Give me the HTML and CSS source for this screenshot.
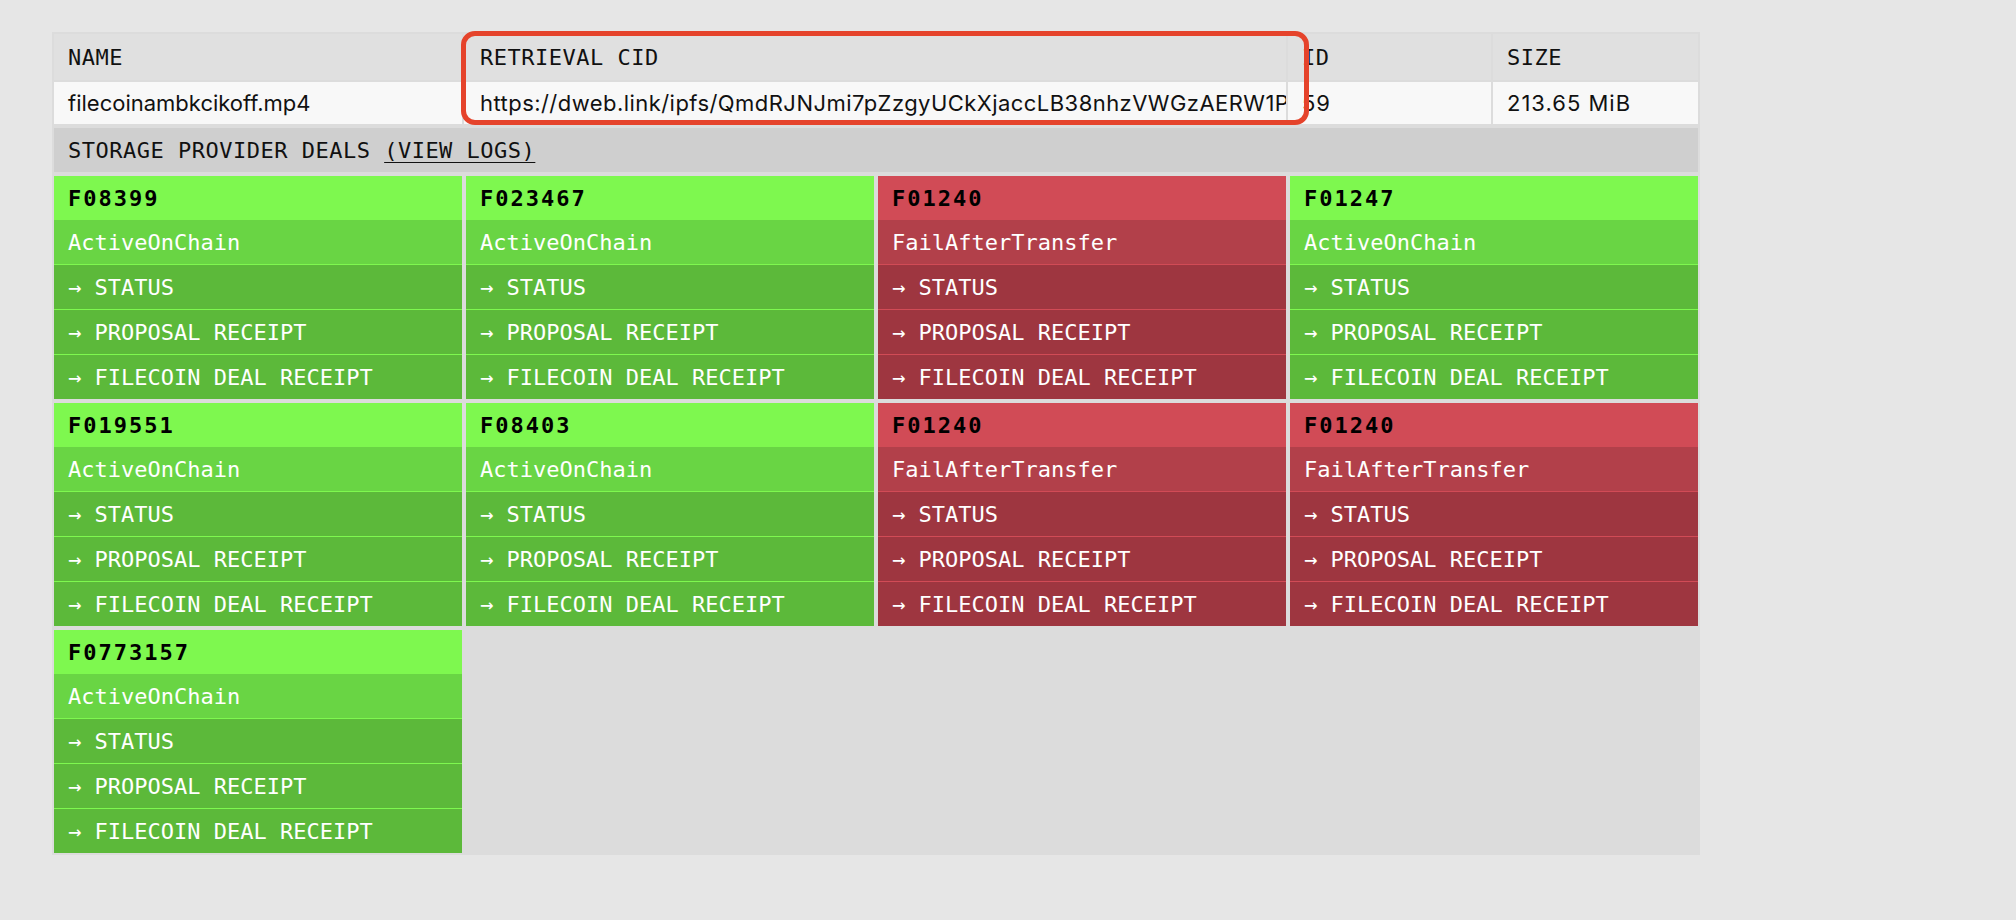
FILE: index.html
```html
<!DOCTYPE html>
<html lang="en">
<head>
<meta charset="utf-8">
<title>Storage Provider Deals</title>
<link rel="stylesheet" href="styles.css">
</head>
<body>
<div class="page">
  <div class="panel">
    <div class="file-table">
      <div class="th">NAME</div>
      <div class="th th-cid">RETRIEVAL CID</div>
      <div class="th">ID</div>
      <div class="th">SIZE</div>
      <div class="td">filecoinambkcikoff.mp4</div>
      <div class="td td-cid">https://dweb.link/ipfs/QmdRJNJmi7pZzgyUCkXjaccLB38nhzVWGzAERW1P</div>
      <div class="td td-num">59</div>
      <div class="td td-num">213.65 MiB</div>
    </div>
    <div class="section-bar">STORAGE PROVIDER DEALS <span class="logs">(VIEW LOGS)</span></div>
    <div class="deals">
      <div class="deal ok">
        <div class="deal-title">F08399</div>
        <div class="deal-state">ActiveOnChain</div>
        <div class="deal-link">→ STATUS</div>
        <div class="deal-link">→ PROPOSAL RECEIPT</div>
        <div class="deal-link">→ FILECOIN DEAL RECEIPT</div>
      </div>
      <div class="deal ok">
        <div class="deal-title">F023467</div>
        <div class="deal-state">ActiveOnChain</div>
        <div class="deal-link">→ STATUS</div>
        <div class="deal-link">→ PROPOSAL RECEIPT</div>
        <div class="deal-link">→ FILECOIN DEAL RECEIPT</div>
      </div>
      <div class="deal fail">
        <div class="deal-title">F01240</div>
        <div class="deal-state">FailAfterTransfer</div>
        <div class="deal-link">→ STATUS</div>
        <div class="deal-link">→ PROPOSAL RECEIPT</div>
        <div class="deal-link">→ FILECOIN DEAL RECEIPT</div>
      </div>
      <div class="deal ok">
        <div class="deal-title">F01247</div>
        <div class="deal-state">ActiveOnChain</div>
        <div class="deal-link">→ STATUS</div>
        <div class="deal-link">→ PROPOSAL RECEIPT</div>
        <div class="deal-link">→ FILECOIN DEAL RECEIPT</div>
      </div>
      <div class="deal ok">
        <div class="deal-title">F019551</div>
        <div class="deal-state">ActiveOnChain</div>
        <div class="deal-link">→ STATUS</div>
        <div class="deal-link">→ PROPOSAL RECEIPT</div>
        <div class="deal-link">→ FILECOIN DEAL RECEIPT</div>
      </div>
      <div class="deal ok">
        <div class="deal-title">F08403</div>
        <div class="deal-state">ActiveOnChain</div>
        <div class="deal-link">→ STATUS</div>
        <div class="deal-link">→ PROPOSAL RECEIPT</div>
        <div class="deal-link">→ FILECOIN DEAL RECEIPT</div>
      </div>
      <div class="deal fail">
        <div class="deal-title">F01240</div>
        <div class="deal-state">FailAfterTransfer</div>
        <div class="deal-link">→ STATUS</div>
        <div class="deal-link">→ PROPOSAL RECEIPT</div>
        <div class="deal-link">→ FILECOIN DEAL RECEIPT</div>
      </div>
      <div class="deal fail">
        <div class="deal-title">F01240</div>
        <div class="deal-state">FailAfterTransfer</div>
        <div class="deal-link">→ STATUS</div>
        <div class="deal-link">→ PROPOSAL RECEIPT</div>
        <div class="deal-link">→ FILECOIN DEAL RECEIPT</div>
      </div>
      <div class="deal ok">
        <div class="deal-title">F0773157</div>
        <div class="deal-state">ActiveOnChain</div>
        <div class="deal-link">→ STATUS</div>
        <div class="deal-link">→ PROPOSAL RECEIPT</div>
        <div class="deal-link">→ FILECOIN DEAL RECEIPT</div>
      </div>
    </div>
  </div>
  <div class="highlight"></div>
</div>
</body>
</html>
```

FILE: styles.css
```css
html, body {
  margin: 0;
  padding: 0;
  background: #e6e6e6;
}

.page {
  position: relative;
  width: 2016px;
  height: 920px;
  padding: 32px 0 0 52px;
  box-sizing: border-box;
}

.panel {
  width: 1648px;
  box-sizing: border-box;
  padding: 2px;
  background: #dcdcdc;
  display: flex;
  flex-direction: column;
  gap: 4px;
}

.file-table {
  display: grid;
  grid-template-columns: 408px 822px 203px 205px;
  grid-template-rows: 46px 42px;
  gap: 2px;
}

.th {
  background: #e0e0e0;
  display: flex;
  align-items: center;
  padding-left: 14px;
  font-family: "DejaVu Sans Mono", monospace;
  font-size: 22px;
  letter-spacing: 0.5px;
  color: #111;
}

.td {
  background: #f8f8f8;
  display: flex;
  align-items: center;
  padding-left: 14px;
  font-family: Inter, "Liberation Sans", sans-serif;
  font-size: 22px;
  color: #111;
  white-space: nowrap;
  overflow: hidden;
}

.th-cid, .td-cid {
  padding-left: 16px;
}

.td-cid {
  letter-spacing: 0.45px;
}

.td-num {
  letter-spacing: 1px;
}

.section-bar {
  height: 44px;
  background: #cfcfcf;
  display: flex;
  align-items: center;
  padding-left: 14px;
  font-family: "DejaVu Sans Mono", monospace;
  font-size: 22px;
  letter-spacing: 0.5px;
  color: #111;
  white-space: pre;
}

.logs {
  text-decoration: underline;
  text-underline-offset: 4px;
  text-decoration-thickness: 1px;
}

.deals {
  display: grid;
  grid-template-columns: repeat(4, 408px);
  grid-auto-rows: 223px;
  gap: 4px;
}

.deal {
  display: flex;
  flex-direction: column;
  font-family: "DejaVu Sans Mono", monospace;
  font-size: 22px;
}

.deal-title {
  height: 44px;
  display: flex;
  align-items: center;
  padding-left: 14px;
  font-weight: bold;
  letter-spacing: 2px;
  color: #000;
}

.deal-state {
  height: 44px;
  display: flex;
  align-items: center;
  padding-left: 14px;
  color: #fff;
}

.deal-link {
  height: 44px;
  display: flex;
  align-items: center;
  padding-left: 14px;
  color: #fff;
  white-space: pre;
  border-top: 1px solid transparent;
}

.ok .deal-title { background: #7ef84f; }
.ok .deal-state { background: #69d544; }
.ok .deal-link { background: #5cb93a; border-top-color: #7ef84f; }

.fail .deal-title { background: #d14b56; }
.fail .deal-state { background: #b2404a; }
.fail .deal-link { background: #9e3640; border-top-color: #d14b56; }

.highlight {
  position: absolute;
  left: 461px;
  top: 31px;
  width: 848px;
  height: 94px;
  box-sizing: border-box;
  border: 5px solid #e5432b;
  border-radius: 14px;
  pointer-events: none;
}
```
